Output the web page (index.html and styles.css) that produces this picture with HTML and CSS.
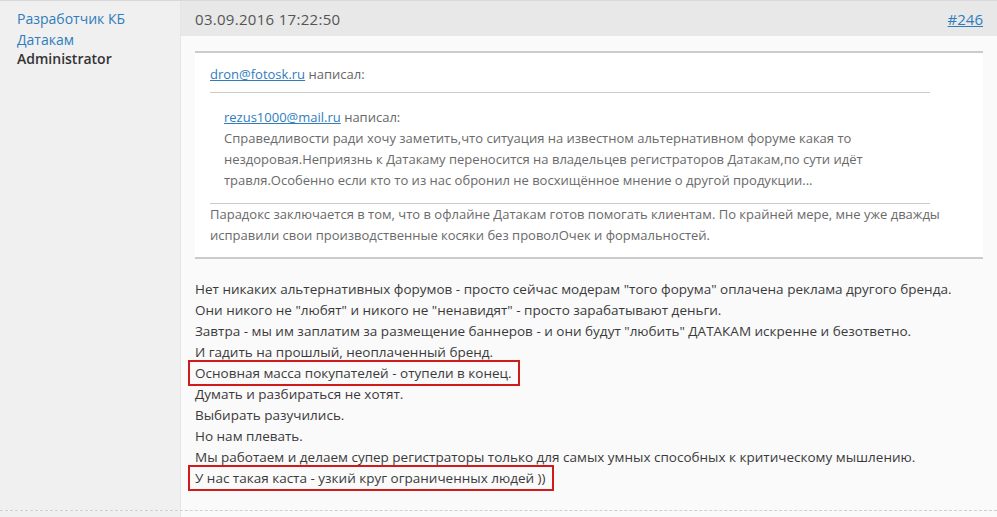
FILE: index.html
```html
<!DOCTYPE html>
<html lang="ru">
<head>
    <meta charset="UTF-8">
    <title>Форум - сообщение #246</title>
    <link rel="stylesheet" href="styles.css">
</head>
<body>
    <div class="post">
        <div class="user">
            <a class="user-name" href="#">Разработчик КБ Датакам</a>
            <div class="user-role">Administrator</div>
        </div>
        <div class="main">
            <div class="head">
                <span class="date">03.09.2016 17:22:50</span>
                <a class="num" href="#">#246</a>
            </div>
            <div class="body">
                <div class="quote">
                    <div class="quote-author"><a href="#">dron@fotosk.ru</a> написал:</div>
                    <div class="quote inner">
                        <div class="quote-author"><a href="#">rezus1000@mail.ru</a> написал:</div>
                        Справедливости ради хочу заметить,что ситуация на известном альтернативном форуме какая то нездоровая.Неприязнь к Датакаму переносится на владельцев регистраторов Датакам,по сути идёт травля.Особенно если кто то из нас обронил не восхищённое мнение о другой продукции...
                    </div>
                    Парадокс заключается в том, что в офлайне Датакам готов помогать клиентам. По крайней мере, мне уже дважды исправили свои производственные косяки без проволОчек и формальностей.
                </div>
                <div class="text">
                    Нет никаких альтернативных форумов - просто сейчас модерам "того форума" оплачена реклама другого бренда.<br>
                    Они никого не "любят" и никого не "ненавидят" - просто зарабатывают деньги.<br>
                    Завтра - мы им заплатим за размещение баннеров - и они будут "любить" ДАТАКАМ искренне и безответно.<br>
                    И гадить на прошлый, неоплаченный бренд.<br>
                    <span class="mark">Основная масса покупателей - отупели в конец.</span><br>
                    Думать и разбираться не хотят.<br>
                    Выбирать разучились.<br>
                    Но нам плевать.<br>
                    Мы работаем и делаем супер регистраторы только для самых умных способных к критическому мышлению.<br>
                    <span class="mark">У нас такая каста - узкий круг ограниченных людей ))</span>
                </div>
            </div>
        </div>
    </div>
    <div class="post next">
        <div class="user"></div>
        <div class="main"></div>
    </div>
</body>
</html>
```

FILE: styles.css
```css
body {
    margin: 0;
    font-family: "Open Sans", "Noto Sans", sans-serif;
    font-size: 13px;
    color: #3c3c3c;
    background: #fafafa;
}
a {
    color: #2f7dbd;
}
.post {
    display: flex;
    border-top: 1px solid #d8d8d8;
}
.post.next {
    border-top: 1px dashed #cfcfcf;
    height: 10px;
}
.user {
    width: 180px;
    flex-shrink: 0;
    box-sizing: border-box;
    padding: 7px 20px 0 17px;
    background: #f0f0f0;
    font-size: 14px;
}
.user-name {
    display: block;
    line-height: 21px;
    text-decoration: none;
}
.user-role {
    font-weight: 600;
    color: #333;
    line-height: 18px;
}
.main {
    flex: 1;
    background: #fafafa;
    border-left: 1px solid #e6e6e6;
}
.head {
    display: flex;
    justify-content: space-between;
    align-items: center;
    height: 35px;
    padding: 0 14px 0 14px;
    background: #e8e8e8;
    font-size: 15px;
}
.date {
    color: #555;
    letter-spacing: 0.3px;
}
.body {
    padding: 15px 14px 21px 14px;
}
.quote {
    background: #fff;
    border-top: 2px solid #cbcbcb;
    border-bottom: 2px solid #cbcbcb;
    padding: 11px 15px 11px 15px;
    line-height: 21px;
    color: #6a6a6a;
}
.quote-author {
    color: #666;
}
.quote.inner {
    margin: 7px 38px 0 0;
    padding: 14px 14px 12px 14px;
    border-top-width: 1px;
    border-bottom-width: 1px;
}
.text {
    margin-top: 20px;
    line-height: 21px;
    font-size: 13.5px;
    color: #3a3a3a;
}
.mark {
    position: relative;
}
.mark::after {
    content: "";
    position: absolute;
    left: -7px;
    right: -8px;
    top: -4px;
    bottom: -4px;
    border: 2px solid #d11a1a;
}
```
